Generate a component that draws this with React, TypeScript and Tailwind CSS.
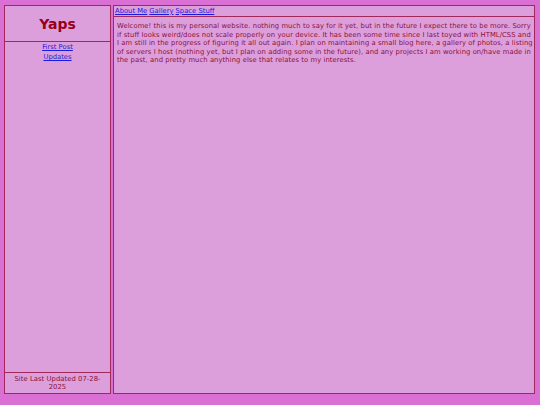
import React from "react";

const lines = [
  "Welcome! this is my personal website. nothing much to say for it yet, but in the future I expect there to be more. Sorry",
  "if stuff looks weird/does not scale properly on your device. It has been some time since I last toyed with HTML/CSS and",
  "I am still in the progress of figuring it all out again. I plan on maintaining a small blog here, a gallery of photos, a listing",
  "of servers I host (nothing yet, but I plan on adding some in the future), and any projects I am working on/have made in",
  "the past, and pretty much anything else that relates to my interests.",
];

export default function App() {
  const border = "border-[#a1285a]";
  return (
    <div
      className="w-[540px] h-[405px] bg-[#da6fd4] flex gap-[2px] pl-[4px] pr-[5px] pt-[5px] pb-[11px] text-[#8a1038]"
      style={{ fontFamily: '"DejaVu Sans", Verdana, sans-serif' }}
    >
      <div className={`w-[107px] shrink-0 flex flex-col border ${border} bg-[#dd9fdc]`}>
        <div className={`h-[36px] flex items-center justify-center border-b ${border}`}>
          <h1 className="text-[14px] font-bold text-[#960018] leading-none">Yaps</h1>
        </div>
        <div className="flex-1 flex flex-col items-center pt-[0px] text-[6.8px] leading-[10px]">
          <a href="#" className="text-[#1a1ae0] underline">First Post</a>
          <a href="#" className="text-[#1a1ae0] underline">Updates</a>
        </div>
        <div className={`h-[21px] border-t ${border} flex items-center justify-center text-center text-[6.8px] leading-[8px] px-[4px] tracking-[0.05px]`}>
          Site Last Updated 07-28-2025
        </div>
      </div>
      <div className={`flex-1 min-w-0 overflow-hidden flex flex-col border ${border} bg-[#dd9fdc]`}>
        <div className={`h-[11px] border-b ${border} flex items-center gap-[2px] px-[1px] text-[6.8px]`}>
          <a href="#" className="text-[#1a1ae0] underline">About Me</a>
          <a href="#" className="text-[#1a1ae0] underline">Gallery</a>
          <a href="#" className="text-[#1a1ae0] underline">Space Stuff</a>
        </div>
        <div className="flex-1 px-[3px] pt-[5px] text-[6.8px] leading-[8.5px] tracking-[0.07px]">
          {lines.map((l, i) => (
            <div key={i} className="whitespace-nowrap">{l}</div>
          ))}
        </div>
      </div>
    </div>
  );
}
